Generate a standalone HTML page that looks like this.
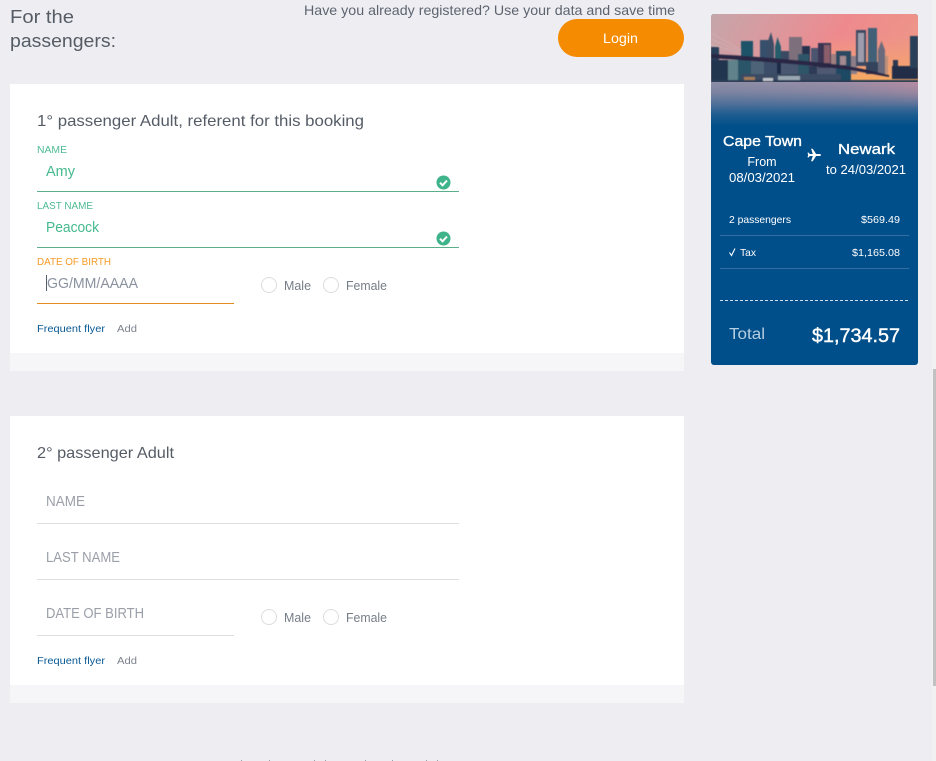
<!DOCTYPE html>
<html>
<head>
<meta charset="utf-8">
<title>Passengers</title>
<style>
html,body{margin:0;padding:0;width:936px;height:761px;overflow:hidden;background:#eeeef2}
.a{position:absolute}
svg text{font-family:"Liberation Sans","DejaVu Sans",sans-serif}
</style>
</head>
<body>
<div class="a" style="left:932px;top:0;width:4px;height:761px;background:#f1f1f4"></div>
<div class="a" style="left:933px;top:369px;width:3px;height:317px;background:#c1c1c1"></div>

<div class="a" style="left:10px;top:84px;width:674px;height:269px;background:#fff"></div>
<div class="a" style="left:10px;top:353px;width:674px;height:18px;background:#f6f6f8"></div>
<div class="a" style="left:10px;top:416px;width:674px;height:269px;background:#fff"></div>
<div class="a" style="left:10px;top:685px;width:674px;height:18px;background:#f6f6f8"></div>

<div class="a" style="left:558px;top:19px;width:126px;height:38px;border-radius:19px;background:#f48b00"></div>

<div class="a" style="left:711px;top:14px;width:207px;height:351px;border-radius:3px;background:#004f8a;overflow:hidden">
<svg width="207" height="112" viewBox="0 0 207 112" style="display:block">
<defs>
<linearGradient id="sky" x1="0" y1="0" x2="1" y2="0.2">
<stop offset="0" stop-color="#c4a6aa"/><stop offset=".3" stop-color="#d99a9f"/><stop offset=".65" stop-color="#ee8a8e"/><stop offset="1" stop-color="#ee9488"/>
</linearGradient>
<linearGradient id="glow" x1="0" y1="0" x2="0" y2="1">
<stop offset="0" stop-color="#f5a070" stop-opacity="0"/><stop offset="1" stop-color="#f8ac5c" stop-opacity=".95"/>
</linearGradient>
<linearGradient id="water" x1="0" y1="0" x2="0" y2="1">
<stop offset="0" stop-color="#8e8fa8"/><stop offset=".22" stop-color="#7d85a2"/><stop offset=".5" stop-color="#4f7099"/><stop offset=".75" stop-color="#1c5c90"/><stop offset="1" stop-color="#004f8a"/>
</linearGradient>
<linearGradient id="wr" x1="0" y1="0" x2="1" y2="0">
<stop offset="0" stop-color="#a888a0" stop-opacity="0"/><stop offset=".6" stop-color="#c08aa0" stop-opacity=".25"/><stop offset="1" stop-color="#d08a9c" stop-opacity=".6"/>
</linearGradient>
<linearGradient id="wv" x1="0" y1="0" x2="0" y2="1">
<stop offset="0" stop-color="#fff" stop-opacity="1"/><stop offset="1" stop-color="#fff" stop-opacity="0"/>
</linearGradient>
<mask id="wm"><rect y="68" width="207" height="26" fill="url(#wv)"/></mask>
<filter id="b" x="-5%" y="-5%" width="110%" height="110%"><feGaussianBlur stdDeviation=".6"/></filter>
</defs>
<rect width="207" height="70" fill="url(#sky)"/>
<rect x="115" y="22" width="92" height="46" fill="url(#glow)"/>
<g filter="url(#b)">
<!-- far skyline -->
<rect x="0" y="33" width="8" height="35" fill="#2c3f5a"/>
<rect x="30" y="27" width="12" height="41" fill="#1f5268"/>
<rect x="49" y="26" width="9" height="42" fill="#35506c"/>
<polygon points="56,30 60,18 63,30 63,68 56,68" fill="#3d4e68"/>
<polygon points="64,33 66.500,23 70,33 70,68 64,68" fill="#265d6c"/>
<rect x="70" y="37" width="14" height="31" fill="#3a4a64"/>
<rect x="78" y="23" width="13" height="30" fill="#7d6f7c"/>
<rect x="91" y="32" width="8" height="36" fill="#27314e"/>
<rect x="100" y="34" width="7" height="34" fill="#4c5470"/>
<rect x="107" y="29" width="13" height="39" fill="#3b3552"/>
<rect x="113" y="31" width="6" height="18" fill="#8a5f6a"/>
<rect x="120" y="40" width="6" height="28" fill="#a07f80"/>
<rect x="140" y="42" width="6" height="18" fill="#8c7d88"/>
<rect x="145" y="16" width="10" height="36" fill="#3e4a62"/>
<rect x="147" y="19" width="6" height="29" fill="#9c9cac"/>
<rect x="157" y="14" width="9" height="44" fill="#3f6078"/>
<rect x="155" y="48" width="12" height="12" fill="#34435c"/>
<polygon points="167,36 170.500,27 174,36 174,60 167,60" fill="#6a6a7c"/>
<rect x="174" y="42" width="3" height="18" fill="#c09078"/>
<rect x="182" y="46" width="5" height="10" fill="#2d3850"/>
<rect x="181" y="52" width="26" height="13" fill="#242e46"/>
<rect x="199" y="22" width="8" height="32" fill="#2c4058"/>
<!-- near buildings -->
<rect x="0" y="46" width="20" height="22" fill="#233650"/>
<rect x="17" y="46" width="10" height="22" fill="#60828a"/>
<rect x="27" y="46" width="13" height="22" fill="#2c5468"/>
<rect x="40" y="46" width="13" height="22" fill="#4e6478"/>
<rect x="53" y="48" width="13" height="20" fill="#3a4e68"/>
<rect x="66" y="48" width="4" height="20" fill="#1f2c48"/>
<rect x="70" y="49" width="17" height="19" fill="#4a5870"/>
<rect x="87" y="40" width="11" height="28" fill="#2e5468"/>
<rect x="98" y="52" width="8" height="16" fill="#2e3a56"/>
<rect x="106" y="54" width="20" height="14" fill="#4f5a72"/>
<!-- bridge tower -->
<rect x="125" y="37" width="15" height="32" fill="#2c4860"/>
<rect x="129" y="42" width="6" height="9" fill="#a28a90"/>
<rect x="126" y="55" width="13" height="14" fill="#1f4a64"/>
<!-- bridge deck -->
<path d="M0 40 C40 42 90 46 130 51 C150 54 165 58 178 61 L178 63 C160 60 148 57 130 55 C90 50 40 47 0 44Z" fill="#2a2845"/>
<path d="M0 19 L30 36 M0 25 L30 38 M0 30 L30 40" stroke="#cdb8b8" stroke-width=".6" fill="none"/>
<rect x="30" y="60" width="100" height="8" fill="#3a4c64"/>
<rect x="0" y="66" width="207" height="2.500" fill="#2c3e56"/>
<rect x="33" y="63" width="11" height="3" fill="#a57c56"/>
<rect x="52" y="64" width="10" height="3" fill="#c0c4cc"/>
<rect x="67" y="62" width="22" height="4" fill="#9aa8b2"/>
</g>
<rect y="68" width="207" height="44" fill="url(#water)"/>
<rect y="68" width="207" height="26" fill="url(#wr)" mask="url(#wm)"/>
</svg>
</div>

<svg class="a" style="left:0;top:0" width="936" height="761" viewBox="0 0 936 761">
<!-- header -->
<text x="10" y="23" font-size="18" fill="#555c66" textLength="64" lengthAdjust="spacingAndGlyphs">For the</text>
<text x="10" y="47" font-size="18" fill="#555c66" textLength="106" lengthAdjust="spacingAndGlyphs">passengers:</text>
<text x="304" y="15" font-size="14" fill="#5d6470" textLength="371" lengthAdjust="spacingAndGlyphs">Have you already registered? Use your data and save time</text>
<text x="603" y="43" font-size="13.500" fill="#fff" textLength="35" lengthAdjust="spacingAndGlyphs">Login</text>

<!-- passenger 1 -->
<text x="37" y="126" font-size="16" fill="#555c66" textLength="327" lengthAdjust="spacingAndGlyphs">1° passenger Adult, referent for this booking</text>
<text x="37" y="153" font-size="10" fill="#4dbb94" textLength="30" lengthAdjust="spacingAndGlyphs">NAME</text>
<text x="46" y="176" font-size="14.500" fill="#45b98f" textLength="29" lengthAdjust="spacingAndGlyphs">Amy</text>
<rect x="37" y="191" width="422" height="1" fill="#5aae8a"/>
<circle cx="443.500" cy="182.500" r="7" fill="#3fb389"/>
<path d="M440 182.700l2.600 2.600 4.400-4.800" fill="none" stroke="#fff" stroke-width="2"/>
<text x="37" y="209" font-size="10" fill="#4dbb94" textLength="56" lengthAdjust="spacingAndGlyphs">LAST NAME</text>
<text x="46" y="232" font-size="14.500" fill="#45b98f" textLength="53" lengthAdjust="spacingAndGlyphs">Peacock</text>
<rect x="37" y="247" width="422" height="1" fill="#5aae8a"/>
<circle cx="443.500" cy="238.500" r="7" fill="#3fb389"/>
<path d="M440 238.700l2.600 2.600 4.400-4.800" fill="none" stroke="#fff" stroke-width="2"/>
<text x="37" y="265" font-size="10" fill="#f59a25" textLength="74" lengthAdjust="spacingAndGlyphs">DATE OF BIRTH</text>
<rect x="46" y="275" width="1" height="16" fill="#55606e"/>
<text x="47" y="288" font-size="14.500" fill="#8a929e" textLength="91" lengthAdjust="spacingAndGlyphs">GG/MM/AAAA</text>
<rect x="37" y="303" width="197" height="1" fill="#e58a1c"/>
<circle cx="269" cy="285" r="7.500" fill="#fff" stroke="#dcdcdc" stroke-width="1"/>
<text x="284" y="290" font-size="12.500" fill="#777d88" textLength="27" lengthAdjust="spacingAndGlyphs">Male</text>
<circle cx="331" cy="285" r="7.500" fill="#fff" stroke="#dcdcdc" stroke-width="1"/>
<text x="346" y="290" font-size="12.500" fill="#777d88" textLength="41" lengthAdjust="spacingAndGlyphs">Female</text>
<text x="37" y="332" font-size="10.500" fill="#0a5a94" textLength="68" lengthAdjust="spacingAndGlyphs">Frequent flyer</text>
<text x="117" y="332" font-size="10.500" fill="#7d838e" textLength="20" lengthAdjust="spacingAndGlyphs">Add</text>

<!-- passenger 2 -->
<text x="37" y="458" font-size="16" fill="#555c66" textLength="137" lengthAdjust="spacingAndGlyphs">2° passenger Adult</text>
<text x="46" y="506" font-size="14.500" fill="#9a9fa8" textLength="39" lengthAdjust="spacingAndGlyphs">NAME</text>
<rect x="37" y="523" width="422" height="1" fill="#dedede"/>
<text x="46" y="562" font-size="14.500" fill="#9a9fa8" textLength="74" lengthAdjust="spacingAndGlyphs">LAST NAME</text>
<rect x="37" y="579" width="422" height="1" fill="#dedede"/>
<text x="46" y="618" font-size="14.500" fill="#9a9fa8" textLength="98" lengthAdjust="spacingAndGlyphs">DATE OF BIRTH</text>
<rect x="37" y="635" width="197" height="1" fill="#dedede"/>
<circle cx="269" cy="617" r="7.500" fill="#fff" stroke="#dcdcdc" stroke-width="1"/>
<text x="284" y="622" font-size="12.500" fill="#777d88" textLength="27" lengthAdjust="spacingAndGlyphs">Male</text>
<circle cx="331" cy="617" r="7.500" fill="#fff" stroke="#dcdcdc" stroke-width="1"/>
<text x="346" y="622" font-size="12.500" fill="#777d88" textLength="41" lengthAdjust="spacingAndGlyphs">Female</text>
<text x="37" y="664" font-size="10.500" fill="#0a5a94" textLength="68" lengthAdjust="spacingAndGlyphs">Frequent flyer</text>
<text x="117" y="664" font-size="10.500" fill="#7d838e" textLength="20" lengthAdjust="spacingAndGlyphs">Add</text>

<!-- clipped bottom glyph tops -->
<g fill="#9aa0aa">
<rect x="241" y="760" width="1" height="1"/><rect x="269" y="760" width="1" height="1"/><rect x="314" y="760" width="1" height="1"/><rect x="325" y="760" width="1" height="1"/><rect x="365" y="760" width="1" height="1"/><rect x="392" y="760" width="1" height="1"/><rect x="426" y="760" width="1" height="1"/><rect x="437" y="760" width="1" height="1"/>
</g>

<!-- summary card -->
<text x="723" y="146" font-size="15" fill="#fff" stroke="#fff" stroke-width=".35" textLength="79" lengthAdjust="spacingAndGlyphs">Cape Town</text>
<text x="762" y="166" font-size="12.500" fill="#fff" text-anchor="middle">From</text>
<text x="729" y="182" font-size="12.500" fill="#fff" textLength="66" lengthAdjust="spacingAndGlyphs">08/03/2021</text>
<path d="M821 155.800c0-.7-.9-1-1.700-1h-3.200l-3.400-5.300h-1.600l1.700 5.300h-3l-1.100-1.400h-1.200l.7 2.400-.7 2.400h1.200l1.100-1.400h3l-1.700 5.300h1.600l3.400-5.300h3.200c.8 0 1.700-.3 1.700-1z" fill="#fff" transform="translate(0 -.8)"/>
<text x="838" y="154" font-size="15" fill="#fff" stroke="#fff" stroke-width=".35" textLength="57" lengthAdjust="spacingAndGlyphs">Newark</text>
<text x="826" y="174" font-size="12.500" fill="#fff" textLength="80" lengthAdjust="spacingAndGlyphs">to 24/03/2021</text>
<text x="729" y="223" font-size="10.500" fill="#fff" textLength="62" lengthAdjust="spacingAndGlyphs">2 passengers</text>
<text x="861" y="223" font-size="10.500" fill="#fff" textLength="39" lengthAdjust="spacingAndGlyphs">$569.49</text>
<rect x="720" y="235" width="189" height="1" fill="#33709f"/>
<path d="M729.500 252.500l2 3 3.500-7" fill="none" stroke="#fff" stroke-width="1.100"/>
<text x="740" y="256" font-size="10.500" fill="#fff" textLength="16" lengthAdjust="spacingAndGlyphs">Tax</text>
<text x="852" y="256" font-size="10.500" fill="#fff" textLength="48" lengthAdjust="spacingAndGlyphs">$1,165.08</text>
<rect x="720" y="268" width="189" height="1" fill="#33709f"/>
<line x1="720" y1="300.500" x2="909" y2="300.500" stroke="#cfe0ee" stroke-width="1" stroke-dasharray="3 2"/>
<text x="729" y="339" font-size="15.500" fill="#b5cde0" textLength="36" lengthAdjust="spacingAndGlyphs">Total</text>
<text x="812" y="342" font-size="19" fill="#fff" stroke="#fff" stroke-width=".4" textLength="88" lengthAdjust="spacingAndGlyphs">$1,734.57</text>
</svg>
</body>
</html>
